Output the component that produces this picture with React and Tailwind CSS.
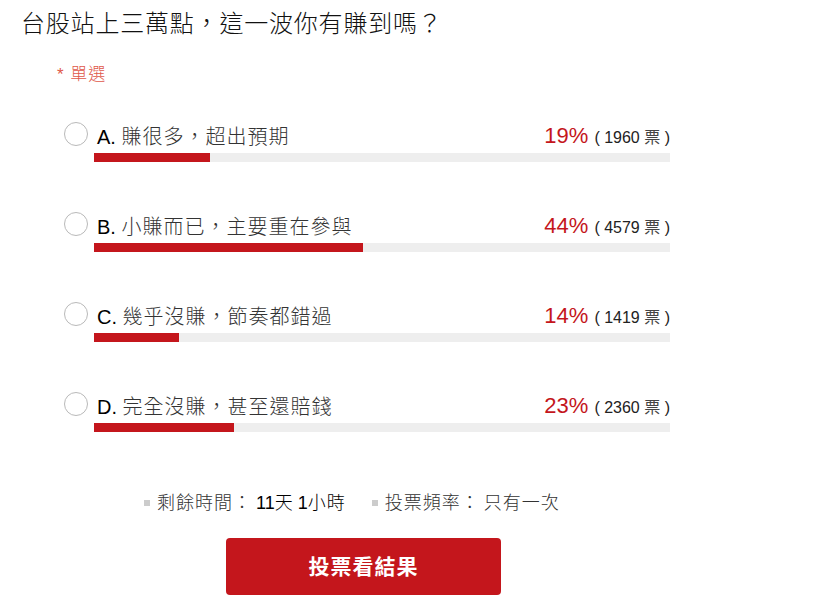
import React from "react";

const options = [
  { label: "A.", text: "賺很多，超出預期", pct: "19%", votes: 1960, bar: 116 },
  { label: "B.", text: "小賺而已，主要重在參與", pct: "44%", votes: 4579, bar: 269 },
  { label: "C.", text: "幾乎沒賺，節奏都錯過", pct: "14%", votes: 1419, bar: 85 },
  { label: "D.", text: "完全沒賺，甚至還賠錢", pct: "23%", votes: 2360, bar: 140 },
];

function OptionRow({ opt }) {
  return (
    <div className="flex items-start h-[90px]">
      <div className="w-6 h-6 mt-[2px] rounded-full border border-[#b9b9b9] bg-white shrink-0" />
      <div className="ml-[6px] w-[576px]">
        <div className="flex items-end justify-between h-[30px]">
          <div className="pl-[3px] text-[20px] leading-[26px] text-[#222]">
            <span className="text-black">{opt.label}</span>{" "}
            <span className="font-light text-[#333] tracking-[1px]">{opt.text}</span>
          </div>
          <div className="flex items-baseline">
            <span className="text-[22px] leading-[28px] text-[#c4161c]">{opt.pct}</span>
            <span className="ml-[6px] text-[16px] text-[#222]">
              ( {opt.votes} <span className="text-[#444]">票</span> )
            </span>
          </div>
        </div>
        <div className="mt-[3px] h-[9px] bg-[#eeeeee]">
          <div className="h-full bg-[#c4161c]" style={{ width: opt.bar }} />
        </div>
      </div>
    </div>
  );
}

export default function App() {
  return (
    <div
      lang="zh-Hant-TW"
      className="w-[815px] h-[610px] bg-white overflow-hidden"
      style={{ fontFamily: '"Liberation Sans", Arial, "Noto Sans CJK TC", sans-serif' }}
    >
      <h1 className="pl-[21px] pt-[8px] text-[24px] leading-[32px] font-light tracking-[0.8px] text-[#111]">
        台股站上三萬點，這一波你有賺到嗎？
      </h1>
      <div className="pl-[57px] mt-[25px] text-[17px] leading-[20px] tracking-[1px] text-[#e0584a] font-light">
        * 單選
      </div>
      <div className="pl-[64px] mt-[35px]">
        {options.map((o) => (
          <OptionRow key={o.label} opt={o} />
        ))}
      </div>
      <div className="flex items-center pl-[144px] mt-[11px] text-[18px] leading-[24px] text-[#333]">
        <span className="w-[6px] h-[6px] bg-[#cccccc]" />
        <span className="ml-[7px] font-light tracking-[1px]">剩餘時間：</span>
        <span className="ml-[4px] text-black">
          11<span className="font-light">天</span> 1<span className="font-light tracking-[1px]">小時</span>
        </span>
        <span className="ml-[26px] w-[6px] h-[6px] bg-[#cccccc]" />
        <span className="ml-[7px] font-light tracking-[1px]">投票頻率：</span>
        <span className="ml-[4px] font-light tracking-[1px]">只有一次</span>
      </div>
      <div className="pl-[226px] mt-[23px]">
        <button className="w-[275px] h-[57px] rounded-[4px] bg-[#c4161c] text-white text-[21px] font-bold tracking-[1px]">
          投票看結果
        </button>
      </div>
    </div>
  );
}
